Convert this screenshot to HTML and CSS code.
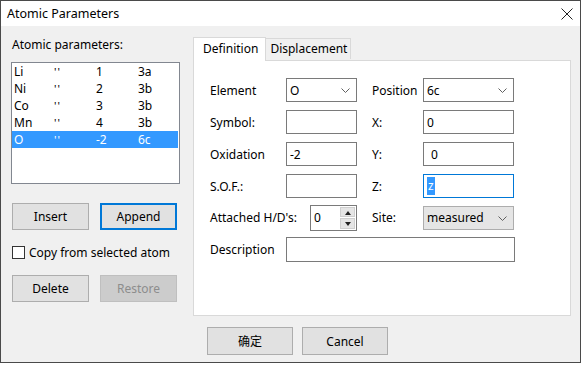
FILE: index.html
```html
<!DOCTYPE html>
<html lang="en">
<head>
  <meta charset="UTF-8" />
  <title>Atomic Parameters</title>
  <link rel="stylesheet" href="styles.css">
</head>
<body>
  <div class="window">
    <div class="titlebar">
      <span class="title">Atomic Parameters</span>
      <svg class="close" width="12" height="12" viewBox="0 0 12 12">
        <path d="M0.5 0.5 L11.5 11.5 M11.5 0.5 L0.5 11.5" stroke="#222" stroke-width="1" fill="none"/>
      </svg>
    </div>

    <div class="client">
      <div class="main">
        <!-- Atom list -->
        <div class="left">
          <div class="list-label">Atomic parameters:</div>
          <div class="atom-list">
            <div class="atom-row"><span class="c-name">Li</span><span class="c-q">''</span><span class="c-ox">1</span><span>3a</span></div>
            <div class="atom-row"><span class="c-name">Ni</span><span class="c-q">''</span><span class="c-ox">2</span><span>3b</span></div>
            <div class="atom-row"><span class="c-name">Co</span><span class="c-q">''</span><span class="c-ox">3</span><span>3b</span></div>
            <div class="atom-row"><span class="c-name">Mn</span><span class="c-q">''</span><span class="c-ox">4</span><span>3b</span></div>
            <div class="atom-row selected"><span class="c-name">O</span><span class="c-q">''</span><span class="c-ox">-2</span><span>6c</span></div>
          </div>
          <div class="btn-row">
            <button class="btn">Insert</button>
            <button class="btn default">Append</button>
          </div>
          <label class="check"><span class="check-box"></span>Copy from selected atom</label>
          <div class="btn-row second">
            <button class="btn">Delete</button>
            <button class="btn" disabled>Restore</button>
          </div>
        </div>

        <!-- Tabs -->
        <div class="tabs">
          <div class="tab-strip">
            <div class="tab active">Definition</div>
            <div class="tab">Displacement</div>
          </div>
          <div class="pane">
            <div class="form-row">
              <span class="lbl">Element</span>
              <div class="field combo small">O<svg class="chev" width="9" height="5" viewBox="0 0 9 5"><polyline points="0.5,0.5 4.5,4.5 8.5,0.5" stroke="#606060" fill="none"/></svg></div>
              <span class="lbl lbl2">Position</span>
              <div class="field combo wide">6c<svg class="chev" width="9" height="5" viewBox="0 0 9 5"><polyline points="0.5,0.5 4.5,4.5 8.5,0.5" stroke="#606060" fill="none"/></svg></div>
            </div>
            <div class="form-row">
              <span class="lbl">Symbol:</span>
              <div class="field small"></div>
              <span class="lbl lbl2">X:</span>
              <div class="field wide">0</div>
            </div>
            <div class="form-row">
              <span class="lbl">Oxidation</span>
              <div class="field small">-2</div>
              <span class="lbl lbl2">Y:</span>
              <div class="field wide pad-y">0</div>
            </div>
            <div class="form-row">
              <span class="lbl">S.O.F.:</span>
              <div class="field small"></div>
              <span class="lbl lbl2">Z:</span>
              <div class="field wide focused"><span class="sel-text">z</span></div>
            </div>
            <div class="form-row tall">
              <span class="lbl lbl-hd">Attached H/D's:</span>
              <div class="field spin">0
                <div class="spin-btns">
                  <span class="spin-up"></span>
                  <span class="spin-down"></span>
                </div>
              </div>
              <span class="lbl lbl2">Site:</span>
              <div class="field combo wide site">measured<svg class="chev" width="9" height="5" viewBox="0 0 9 5"><polyline points="0.5,0.5 4.5,4.5 8.5,0.5" stroke="#606060" fill="none"/></svg></div>
            </div>
            <div class="form-row tall">
              <span class="lbl">Description</span>
              <div class="field desc"></div>
            </div>
          </div>
        </div>
      </div>

      <div class="footer">
        <button class="btn footer-btn">确定</button>
        <button class="btn footer-btn">Cancel</button>
      </div>
    </div>
  </div>
</body>
</html>
```

FILE: styles.css
```css
body {
  margin: 0;
  background: #ffffff;
  font-family: "Noto Sans", "Noto Sans CJK SC", sans-serif;
  font-size: 12px;
  color: #000;
}

.window {
  width: 579px;
  height: 361px;
  border: 1px solid #4a4a4a;
  display: flex;
  flex-direction: column;
  background: #f0f0f0;
}

.titlebar {
  height: 25px;
  background: #fff;
  display: flex;
  align-items: center;
  justify-content: space-between;
  padding: 0 7px 0 6px;
  flex-shrink: 0;
}

.title {
  font-size: 12.5px;
}

.close {
  margin-top: 1px;
}

.client {
  flex: 1;
  display: flex;
  flex-direction: column;
}

.main {
  display: flex;
  padding-left: 10px;
  gap: 13px;
}

/* left column */
.left {
  width: 169px;
  display: flex;
  flex-direction: column;
}

.list-label {
  margin-top: 11px;
  line-height: 16px;
  padding-left: 1px;
}

.atom-list {
  margin-top: 9px;
  height: 120px;
  border: 1px solid #828790;
  background: #fff;
}

.atom-row {
  display: flex;
  height: 17px;
  line-height: 17px;
  padding-left: 2px;
  margin-right: 1px;
}

.atom-row.selected {
  background: #3399ff;
  color: #fff;
}

.c-name { width: 40px; }
.c-q { width: 42px; font-size: 11px; letter-spacing: 1px; }
.c-ox { width: 42px; }

.btn-row {
  display: flex;
  gap: 11px;
  margin-top: 19px;
  padding-left: 1px;
}

.btn-row.second {
  margin-top: 16px;
}

.btn {
  width: 77px;
  height: 27px;
  background: #e1e1e1;
  border: 1px solid #adadad;
  font-family: inherit;
  font-size: 12px;
  color: #000;
  padding: 0;
}

.btn.default {
  border: 2px solid #0078d7;
}

.btn:disabled {
  background: #cccccc;
  border-color: #bfbfbf;
  color: #8d8d8d;
}

.check {
  display: flex;
  align-items: center;
  gap: 4px;
  margin-top: 16px;
  padding-left: 1px;
  line-height: 13px;
}

.check-box {
  width: 11px;
  height: 11px;
  border: 1px solid #333;
  background: #fff;
}

/* tab control */
.tabs {
  width: 378px;
  margin-top: 10px;
  display: flex;
  flex-direction: column;
}

.tab-strip {
  display: flex;
  align-items: flex-end;
  height: 24px;
  position: relative;
  z-index: 1;
}

.tab {
  height: 20px;
  line-height: 20px;
  padding: 0 3px 0 4px;
  border: 1px solid #d9d9d9;
  border-bottom: none;
  background: #f0f0f0;
  margin-bottom: 1px;
}

.tab.active {
  height: 23px;
  line-height: 21px;
  background: #fff;
  padding: 0 7px 0 9px;
  margin-bottom: -1px;
  margin-right: -1px;
}

.pane {
  height: 237px;
  background: #fff;
  border: 1px solid #d9d9d9;
  padding: 17px 0 0 16px;
  display: flex;
  flex-direction: column;
  gap: 8px;
}

.form-row {
  display: flex;
  align-items: center;
  height: 24px;
}

.form-row.tall {
  height: 25px;
  margin-top: -1px;
}

.lbl {
  width: 76px;
  flex-shrink: 0;
}

.lbl2 {
  width: 51px;
  margin-left: 15px;
}

.lbl-hd {
  width: 100px;
}

.field {
  height: 22px;
  line-height: 21px;
  border: 1px solid #7a7a7a;
  background: #fff;
  padding-left: 3px;
  box-sizing: content-box;
  display: flex;
  align-items: center;
  position: relative;
}

.field.small { width: 66px; }
.field.wide { width: 86px; }
.field.desc { width: 224px; height: 23px; }
.field.pad-y { padding-left: 7px; width: 82px; }

.field.focused {
  border-color: #0078d7;
}

.sel-text {
  background: #3399ff;
  color: #fff;
  padding: 0 1px;
  line-height: 18px;
}

.combo .chev {
  position: absolute;
  right: 6px;
  top: 9px;
}

.field.site {
  background: #e5e5e5;
  border-color: #adadad;
  height: 22px;
}

.field.spin {
  width: 42px;
  height: 24px;
}

.spin-btns {
  position: absolute;
  right: 1px;
  top: 1px;
  width: 15px;
  height: 22px;
  display: flex;
  flex-direction: column;
  gap: 1px;
}

.spin-up,
.spin-down {
  flex: 1;
  background: #e5e5e5;
  border: 1px solid #cfcfcf;
  position: relative;
}

.spin-up::after,
.spin-down::after {
  content: "";
  position: absolute;
  left: 4px;
  top: 3px;
  border-left: 3px solid transparent;
  border-right: 3px solid transparent;
}

.spin-up::after { border-bottom: 4px solid #222; }
.spin-down::after { border-top: 4px solid #222; }

/* footer */
.footer {
  display: flex;
  gap: 9px;
  margin-top: 11px;
  padding-left: 206px;
}

.footer-btn {
  width: 86px;
  height: 28px;
}
```
